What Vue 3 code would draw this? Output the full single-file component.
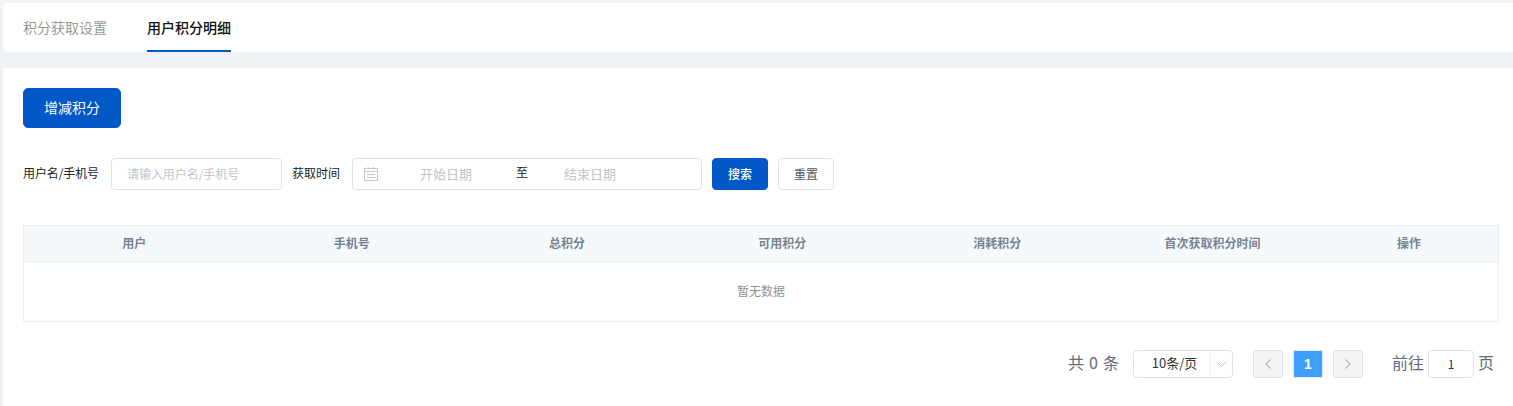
<script setup>
const columns = ['用户', '手机号', '总积分', '可用积分', '消耗积分', '首次获取积分时间', '操作']
</script>

<template>
  <div class="page">
    <nav class="tabs">
      <span class="tab">积分获取设置</span>
      <span class="tab active">用户积分明细</span>
    </nav>
    <main class="panel">
      <button class="btn primary add"><span class="lift">增减积分</span></button>
      <form class="filters" @submit.prevent>
        <label class="label name-label">用户名/手机号</label>
        <div class="input name-input">请输入用户名/手机号</div>
        <label class="label time-label">获取时间</label>
        <div class="input range">
          <svg class="cal" width="14" height="14" viewBox="0 0 14 14" fill="none" stroke="#c4c8d2" stroke-width="1">
            <rect x="0.5" y="1.5" width="13" height="12" />
            <path d="M0.5 4.5h13M4 0v2.5M10 0v2.5M3 7.5h8M3 10.5h8" />
          </svg>
          <span class="date start">开始日期</span>
          <span class="sep">至</span>
          <span class="date end">结束日期</span>
        </div>
        <button class="btn primary search"><span class="lift">搜索</span></button>
        <button class="btn reset"><span class="lift">重置</span></button>
      </form>
      <section class="table">
        <div class="row head">
          <div v-for="c in columns" :key="c" class="cell">{{ c }}</div>
        </div>
        <div class="empty">暂无数据</div>
      </section>
      <footer class="pager">
        <span class="total">共 0 条</span>
        <div class="size">
          <span class="size-text">10条/页</span>
          <span class="size-arrow">
            <svg width="11" height="7" viewBox="0 0 11 7" fill="none" stroke="#c4c8d0" stroke-width="1"><path d="M1 1l4.5 4.5L10 1" /></svg>
          </span>
        </div>
        <button class="pg prev">
          <svg width="8" height="12" viewBox="0 0 8 12" fill="none" stroke="#c0c4cc" stroke-width="1.6"><path d="M6.5 1.5L2 6l4.5 4.5" /></svg>
        </button>
        <button class="pg current">1</button>
        <button class="pg next">
          <svg width="8" height="12" viewBox="0 0 8 12" fill="none" stroke="#c0c4cc" stroke-width="1.6"><path d="M1.5 1.5L6 6l-4.5 4.5" /></svg>
        </button>
        <span class="goto">前往</span>
        <div class="jump">1</div>
        <span class="unit">页</span>
      </footer>
    </main>
  </div>
</template>

<style>
html, body { margin: 0; background: #f0f3f6; }
</style>

<style scoped>
.page {
  width: 1513px;
  height: 406px;
  box-sizing: border-box;
  padding: 3px 0 0 3px;
  background: #f0f3f6;
  overflow: hidden;
  font-family: "Noto Sans CJK SC", "Liberation Sans", sans-serif;
}
.tabs {
  height: 49px;
  display: flex;
  gap: 40px;
  padding-left: 20px;
  background: #fff;
  border-radius: 4px 0 0 4px;
}
.tab {
  height: 49px;
  box-sizing: border-box;
  line-height: 49px;
  font-size: 14px;
  color: #999;
  width: 84px;
  white-space: nowrap;
}
.active {
  color: #111;
  font-weight: 500;
  border-bottom: 2px solid #0059c6;
}
.panel {
  margin-top: 16px;
  height: 338px;
  box-sizing: border-box;
  padding: 20px 14px 0 20px;
  background: #fff;
}
.btn {
  padding: 0;
  font-family: inherit;
  cursor: pointer;
  border-radius: 4px;
  border: 1px solid #dfe1e8;
  background: #fff;
  color: #555;
  font-size: 12px;
}
.lift { display: block; margin-top: -2px; }
.primary { background: #0059c6; border-color: #0059c6; color: #fff; }
.add { display: block; width: 98px; height: 40px; font-size: 14px; border-radius: 5px; }
.filters {
  display: flex;
  align-items: center;
  height: 32px;
  margin-top: 30px;
  font-size: 12px;
}
.label { color: #222; white-space: nowrap; margin-top: -4px; }
.name-label { width: 76px; letter-spacing: -0.1px; }
.time-label { width: 48px; }
.input {
  box-sizing: border-box;
  height: 32px;
  border: 1px solid #dfe1e8;
  border-radius: 4px;
  color: #c0c4cc;
  font-size: 12px;
  line-height: 30px;
}
.name-input { width: 171px; margin: 0 10px 0 12px; padding-left: 15px; letter-spacing: -0.05px; }
.range {
  display: flex;
  align-items: center;
  width: 350px;
  padding-left: 11px;
  margin-left: 12px;
}
.cal { flex: none; }
.date { width: 54px; text-align: center; white-space: nowrap; font-size: 13px; margin-top: -1px; }
.start { margin-left: 41px; }
.sep { color: #222; margin-left: 43px; width: 12px; margin-top: -4px; }
.end { margin-left: 35px; }
.search { width: 56px; height: 32px; margin-left: 10px; font-weight: 500; }
.reset { width: 56px; height: 32px; margin-left: 10px; }
.table {
  margin-top: 35px;
  width: 1476px;
  box-sizing: border-box;
  border: 1px solid #ebeef5;
}
.row {
  display: grid;
  grid-template-columns: 220.3px repeat(5, 215.15px) 1fr;
}
.head {
  height: 36px;
  background: #f6f9fc;
  border-bottom: 1px solid #ebeef5;
  color: #77838f;
  font-size: 12px;
  font-weight: 700;
  line-height: 33px;
  box-sizing: border-box;
}
.cell { text-align: center; white-space: nowrap; }
.empty {
  height: 59px;
  line-height: 57px;
  text-align: center;
  font-size: 12px;
  color: #909399;
}
.pager {
  display: flex;
  align-items: center;
  height: 28px;
  margin-top: 28px;
  width: 1476px;
  color: #606b7a;
  font-size: 16px;
  white-space: nowrap;
}
.total { margin-left: 1045px; width: 65px; word-spacing: 1.5px; margin-top: -4px; }
.size {
  box-sizing: border-box;
  display: flex;
  align-items: center;
  width: 100px;
  height: 28px;
  border: 1px solid #dfe1e8;
  border-radius: 4px;
}
.size-text { width: 76px; text-align: center; padding-left: 5px; box-sizing: border-box; font-size: 13px; color: #333; margin-top: -3px; }
.size-arrow {
  flex: 1;
  height: 22px;
  display: flex;
  align-items: center;
  justify-content: center;
  border-left: 1px solid #edeef2;
}
.pg {
  box-sizing: border-box;
  width: 30px;
  height: 28px;
  padding: 0;
  margin-left: 10px;
  display: flex;
  align-items: center;
  justify-content: center;
  border: 1px solid #dfe1e8;
  border-radius: 2px;
  background: #f4f4f5;
  font-family: "Liberation Sans", sans-serif;
}
.prev { margin-left: 20px; }
.current { background: #409eff; border-color: #dfe9f5; color: #fff; font-size: 14px; font-weight: 700; }
.goto { margin-left: 29px; margin-top: -4px; }
.unit { margin-top: -4px; }
.jump {
  box-sizing: border-box;
  width: 46px;
  height: 28px;
  margin: 0 4px 0 4px;
  border: 1px solid #dfe1e8;
  border-radius: 4px;
  text-align: center;
  line-height: 26px;
  font-size: 12px;
  color: #333;
}
</style>
